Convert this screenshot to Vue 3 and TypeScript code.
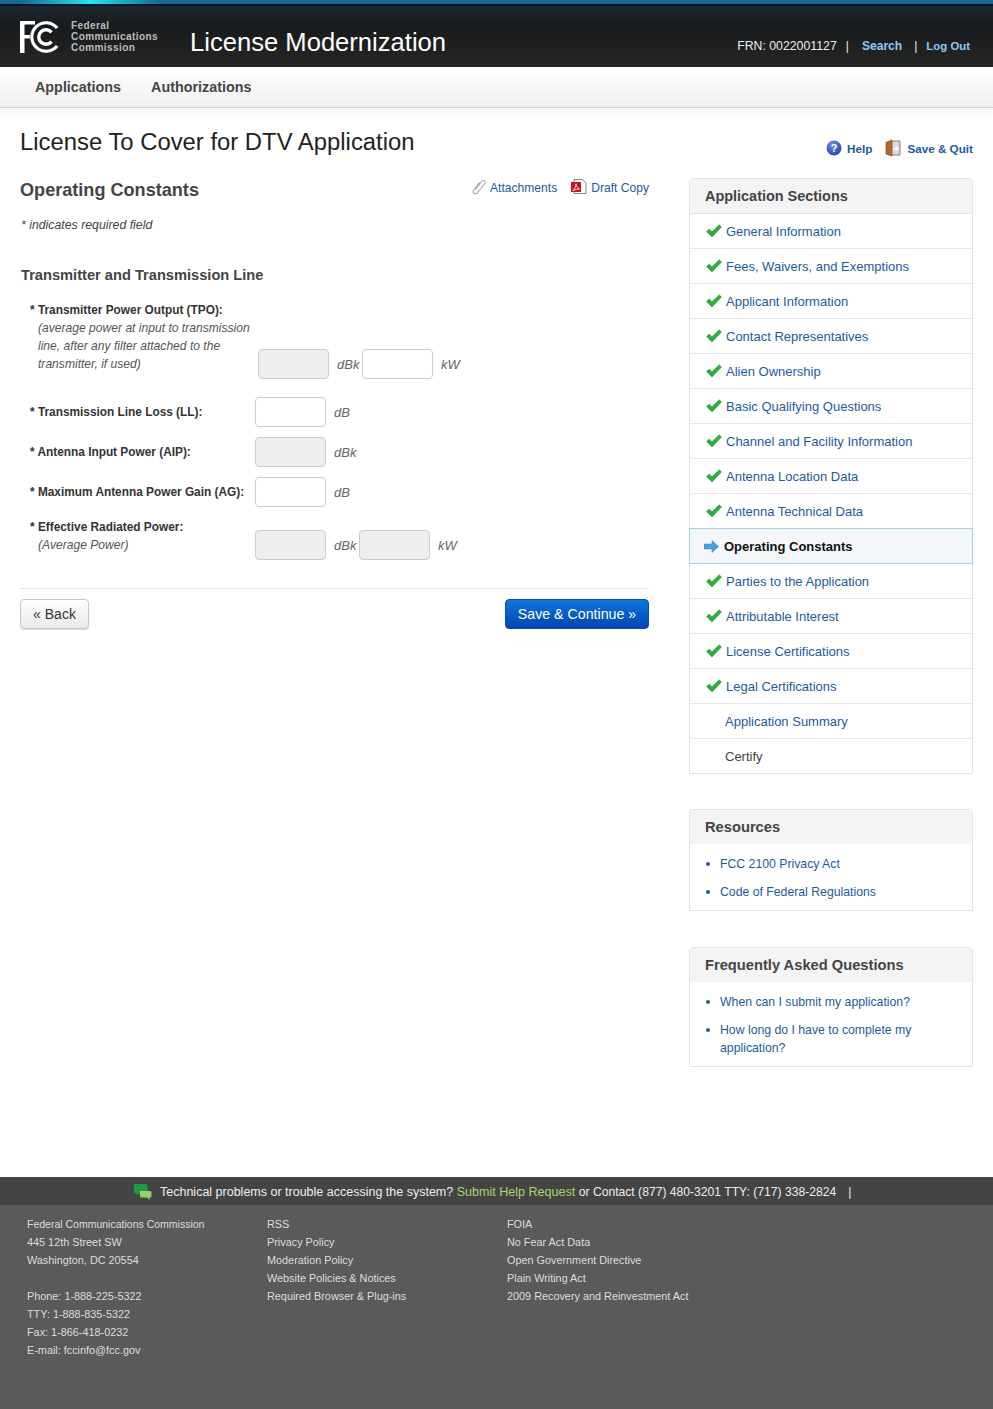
<script setup lang="ts">
interface Section { label: string; done: boolean; current?: boolean }
const sections: Section[] = [
  { label: 'General Information', done: true },
  { label: 'Fees, Waivers, and Exemptions', done: true },
  { label: 'Applicant Information', done: true },
  { label: 'Contact Representatives', done: true },
  { label: 'Alien Ownership', done: true },
  { label: 'Basic Qualifying Questions', done: true },
  { label: 'Channel and Facility Information', done: true },
  { label: 'Antenna Location Data', done: true },
  { label: 'Antenna Technical Data', done: true },
  { label: 'Operating Constants', done: false, current: true },
  { label: 'Parties to the Application', done: true },
  { label: 'Attributable Interest', done: true },
  { label: 'License Certifications', done: true },
  { label: 'Legal Certifications', done: true },
  { label: 'Application Summary', done: false },
  { label: 'Certify', done: false },
]
const footerA = ['Federal Communications Commission', '445 12th Street SW', 'Washington, DC 20554', '', 'Phone: 1-888-225-5322', 'TTY: 1-888-835-5322', 'Fax: 1-866-418-0232', 'E-mail: fccinfo@fcc.gov']
const footerB = ['RSS', 'Privacy Policy', 'Moderation Policy', 'Website Policies & Notices', 'Required Browser & Plug-ins']
const footerC = ['FOIA', 'No Fear Act Data', 'Open Government Directive', 'Plain Writing Act', '2009 Recovery and Reinvestment Act']
</script>

<template>
  <div class="page">
    <div class="topline"><div class="glow"></div></div>
    <header class="masthead">
      <div class="brand">
        <svg class="logo" width="41" height="32" viewBox="0 0 41 32">
          <path d="M0 0H15V3.500H4.500V14H11.500V17.500H4.500V32H0Z" fill="#fff" />
          <path d="M38.600 6.100A16 16 0 1 0 38.600 25.900L35.900 23.700A12.500 12.500 0 1 1 35.900 8.300Z" fill="#fff" stroke="#1b1d20" stroke-width=".4" />
          <path d="M32.900 10.200A9 9 0 1 0 32.900 21.800L30.200 19.500A5.500 5.500 0 1 1 30.200 12.500Z" fill="#fff" />
        </svg>
        <div class="agency"><span>Federal</span><span>Communications</span><span>Commission</span></div>
      </div>
      <div class="product">License Modernization</div>
      <div class="usernav">
        <span class="frn">FRN: 0022001127</span><span class="pipe first">|</span>
        <a class="toplink">Search</a><span class="pipe second">|</span><a class="toplink logout">Log Out</a>
      </div>
    </header>
    <nav class="mainnav"><a>Applications</a><a>Authorizations</a></nav>

    <div class="titlebar">
      <h1>License To Cover for DTV Application</h1>
      <div class="titleactions">
        <a class="act">
          <svg width="16" height="16" viewBox="0 0 16 16"><defs><radialGradient id="hg" cx=".4" cy=".3" r=".8"><stop offset="0" stop-color="#6f8fe8" /><stop offset="1" stop-color="#1f3fa8" /></radialGradient></defs><circle cx="8" cy="8" r="7.5" fill="url(#hg)" /><text x="8" y="12" text-anchor="middle" class="qmark">?</text></svg>
          Help
        </a>
        <a class="act quit">
          <svg width="16" height="18" viewBox="0 0 16 18"><path d="M6 2H15V16H6Z" fill="#d9d9d9" stroke="#9a7a5c" /><path d="M1 3.500L7 1V17L1 15Z" fill="#b5652e" stroke="#8a4a20" stroke-width=".7" /><path d="M8.500 9H11V7L14 9.500L11 12V10.500H8.500Z" fill="#fff" /></svg>
          Save &amp; Quit
        </a>
      </div>
    </div>

    <div class="columns">
      <main class="content">
        <div class="contenthead">
          <h2>Operating Constants</h2>
          <div class="doclinks">
            <a class="doc">
              <svg width="14" height="16" viewBox="0 0 14 16" fill="none" stroke="#aaa" stroke-width="1.100"><path d="M3.500 10.500L9.500 2.500C10.500 1.200 12 1.200 12.700 2C13.400 2.800 13.200 4 12.400 5L5.500 13.600C4.500 14.900 3 15 2 14.200C1 13.400 1 12 1.800 10.900L7.500 3.600" /></svg>
              Attachments
            </a>
            <a class="doc pdf">
              <svg width="16" height="16" viewBox="0 0 16 16"><path d="M3 .5H11.500L15 4V14.500H3Z" fill="#fff" stroke="#666" stroke-width=".8" /><rect x="0" y="3" width="10" height="10" fill="#d0101a" /><path d="M2 11.500C4 10 5 7 5 4.800C5.500 7.500 6.500 9.500 8.500 10C6.500 10 4.500 10.500 2 11.500Z" fill="none" stroke="#fff" stroke-width=".9" /></svg>
              Draft Copy
            </a>
          </div>
        </div>
        <p class="required">* indicates required field</p>
        <h3>Transmitter and Transmission Line</h3>

        <div class="frow r1">
          <div class="lbl wide"><b>* Transmitter Power Output (TPO):</b><i>(average power at input to transmission<br />line, after any filter attached to the<br />transmitter, if used)</i></div>
          <span class="field off"></span><span class="unit">dBk</span><span class="field"></span><span class="unit">kW</span>
        </div>
        <div class="frow r2">
          <div class="lbl"><b>* Transmission Line Loss (LL):</b></div>
          <span class="field"></span><span class="unit">dB</span>
        </div>
        <div class="frow r3">
          <div class="lbl"><b>* Antenna Input Power (AIP):</b></div>
          <span class="field off"></span><span class="unit">dBk</span>
        </div>
        <div class="frow r4">
          <div class="lbl"><b>* Maximum Antenna Power Gain (AG):</b></div>
          <span class="field"></span><span class="unit">dB</span>
        </div>
        <div class="frow r5">
          <div class="lbl"><b>* Effective Radiated Power:</b><i>(Average Power)</i></div>
          <span class="field off"></span><span class="unit">dBk</span><span class="field off"></span><span class="unit">kW</span>
        </div>

        <div class="actions">
          <button class="btn back">« Back</button>
          <button class="btn primary">Save &amp; Continue »</button>
        </div>
      </main>

      <aside class="side">
        <section class="panel sections">
          <h4>Application Sections</h4>
          <ul>
            <li v-for="s in sections" :key="s.label" :class="{ current: s.current, plain: !s.done && !s.current }">
              <svg v-if="s.done" class="check" width="16" height="14" viewBox="0 0 16 14"><path d="M.5 7.500L3.200 5 6 7.800 13.200 .8 15.500 3 6 13Z" fill="#2fae3f" stroke="#1f8f30" stroke-width=".5" /></svg>
              <svg v-if="s.current" class="arrow" width="15" height="13" viewBox="0 0 15 13"><path d="M0 4H8V.5L14.500 6.500 8 12.500V9H0Z" fill="#4d9ddc" stroke="#3c86c4" stroke-width=".5" /></svg>
              <span>{{ s.label }}</span>
            </li>
          </ul>
        </section>

        <section class="panel links res">
          <h4 class="flat">Resources</h4>
          <ul>
            <li>FCC 2100 Privacy Act</li>
            <li>Code of Federal Regulations</li>
          </ul>
        </section>

        <section class="panel links faq">
          <h4 class="flat">Frequently Asked Questions</h4>
          <ul>
            <li>When can I submit my application?</li>
            <li>How long do I have to complete my<br />application?</li>
          </ul>
        </section>
      </aside>
    </div>

    <footer class="foot">
      <div class="notice">
        <svg width="18" height="16" viewBox="0 0 18 16"><path d="M0 1.500Q0 0 1.500 0H12Q13.500 0 13.500 1.500V8Q13.500 9.500 12 9.500H5L2.500 11.500V9.500H1.500Q0 9.500 0 8Z" fill="#1e9a4a" /><path d="M6 7H16Q17.500 7 17.500 8.500V12Q17.500 13.500 16 13.500H15.500V16L13 13.500H7.500Q6 13.500 6 12Z" fill="#9ccc65" /></svg>
        <span class="noticetext">Technical problems or trouble accessing the system? <a>Submit Help Request</a> <span class="contact">or Contact (877) 480-3201 TTY: (717) 338-2824</span></span>
        <span class="noticepipe">|</span>
      </div>
      <div class="footcols">
        <div class="fc"><div v-for="(t, i) in footerA" :key="i" class="fl">{{ t }}</div></div>
        <div class="fc"><div v-for="t in footerB" :key="t" class="fl">{{ t }}</div></div>
        <div class="fc"><div v-for="t in footerC" :key="t" class="fl">{{ t }}</div></div>
      </div>
    </footer>
  </div>
</template>

<style>
html, body { margin: 0; background: #fff; }
</style>

<style scoped>
.page { width: 993px; font-family: "Liberation Sans", Arial, sans-serif; color: #333; height: 1409px; overflow: hidden; display: flex; flex-direction: column; }
.topline { height: 4px; background: #17688f; border-bottom: 2px solid #04162b; }
.glow { width: 140px; height: 4px; background: linear-gradient(90deg, #17688f, #27e4f2 50%, #17688f); margin-left: 20px; }
.masthead { height: 61px; background: linear-gradient(#1e2732, #181a1c 35%, #262626); display: flex; align-items: flex-start; position: relative; }
.brand { display: flex; width: 190px; padding: 15px 0 0 20px; box-sizing: border-box; }
.agency { display: flex; flex-direction: column; margin: -1px 0 0 10px; color: #bdbdbd; font-size: 10px; font-weight: bold; line-height: 11px; letter-spacing: .42px; }
.product { color: #fff; font-size: 25.6px; line-height: 32px; margin-top: 20px; }
.usernav { margin-left: auto; padding: 33px 23px 0 0; font-size: 12px; line-height: 15px; color: #eee; display: flex; }
.frn { font-size: 12.3px; }
.toplink { color: #8ccaf5; font-weight: bold; font-size: 12.1px; }
.toplink.logout { font-size: 11.4px; }
.pipe { color: #eee; }
.first { margin: 0 13px 0 9px; }
.second { margin: 0 9px 0 12px; }
.mainnav { height: 41px; box-sizing: border-box; border-bottom: 1px solid #d4d4d4; background: linear-gradient(#fff, #f0f0f0); box-shadow: 0 4px 12px rgba(0,0,0,.06); padding-left: 35px; display: flex; gap: 30px; font-size: 14.35px; font-weight: bold; line-height: 40px; color: #444; }
.titlebar { display: flex; justify-content: space-between; align-items: flex-start; padding: 19px 20px 0; height: 70px; box-sizing: border-box; }
h1 { margin: 0; font-size: 23.85px; font-weight: normal; line-height: 30px; color: #222; }
.titleactions { display: flex; gap: 13px; margin-top: 12px; font-size: 11.7px; font-weight: bold; color: #1d5a9f; }
.act { display: flex; align-items: center; gap: 5px; height: 18px; }
.qmark { font: bold 11px "Liberation Sans", sans-serif; fill: #fff; }
.quit { gap: 6px; }
.columns { display: flex; padding: 0 20px; gap: 40px; align-items: flex-start; }
.content { width: 629px; }
.contenthead { display: flex; justify-content: space-between; }
h2 { margin: 0; font-size: 18.1px; line-height: 24px; color: #444; }
.doclinks { display: flex; gap: 14px; font-size: 12.1px; color: #1d5a9f; }
.doc { display: flex; align-items: center; gap: 4px; height: 20px; }
.doc svg { margin-top: -2px; }
.required { margin: 14px 0 0 1px; font-size: 12.3px; line-height: 18px; font-style: italic; color: #444; }
h3 { margin: 31px 0 0 1px; font-size: 14.65px; line-height: 20px; color: #444; }
.frow { display: flex; align-items: flex-end; font-size: 12px; }
.lbl { width: 235px; padding-left: 10px; box-sizing: border-box; line-height: 18px; color: #333; white-space: nowrap; flex: none; }
.lbl.wide { width: 238px; }
.lbl b { display: block; font-size: 11.85px; }
.lbl i { display: block; padding-left: 8px; color: #555; font-size: 12.1px; }
.field { width: 71px; height: 30px; box-sizing: border-box; border: 1px solid #ccc; border-radius: 4px; background: #fff; flex: none; }
.field.off { background: #eee; }
.unit { font-style: italic; font-size: 13px; color: #666; height: 30px; line-height: 32px; margin-left: 8px; width: 25px; flex: none; }
.r1 { margin-top: 16px; }
.r1 .lbl { padding-bottom: 6px; }
.r2 { margin-top: 18px; align-items: center; }
.r3, .r4 { margin-top: 10px; align-items: center; }
.r5 { margin-top: 11px; }
.r5 .lbl { padding-bottom: 6px; }
.actions { margin-top: 28px; border-top: 1px solid #dde6ee; padding-top: 10px; display: flex; justify-content: space-between; }
.btn { height: 30px; border-radius: 4px; font: 14px "Liberation Sans", Arial, sans-serif; padding: 0; box-sizing: border-box; }
.back { width: 69px; border: 1px solid #c8c8c8; background: linear-gradient(#fff, #e9e9e9); color: #333; box-shadow: 0 1px 1px rgba(0,0,0,.15); }
.primary { width: 144px; border: 1px solid #0a4fa8; background: linear-gradient(#0d76da, #0245b2); color: #fff; font-size: 14.2px; }
.side { width: 284px; }
.panel { border: 1px solid #e3e3e3; box-sizing: border-box; border-radius: 4px 4px 0 0; }
h4 { margin: 0; height: 35px; background: #f4f4f4; border-bottom: 1px solid #e3e3e3; box-sizing: border-box; padding-left: 15px; font-size: 14.45px; line-height: 34px; color: #444; }
h4.flat { border-bottom: 0; height: 34px; font-size: 14.7px; }
ul { list-style: none; margin: 0; padding: 0; }
.sections li { height: 35px; box-sizing: border-box; border-bottom: 1px solid #e8e8e8; display: flex; align-items: center; padding-left: 16px; font-size: 13px; color: #1d5a9f; gap: 4px; }
.sections li:last-child { border-bottom: 0; height: 34px; }
.sections li.plain { padding-left: 35px; color: #1d5a9f; }
.sections li:last-child.plain { color: #444; }
.sections li.current { background: #f3f7fa; border: 1px solid #a9cfe2; margin: -1px -1px 0; height: 36px; padding-left: 14px; font-weight: bold; color: #111; font-size: 13px; gap: 5px; }
.check { flex: none; }
.arrow { flex: none; }
.links li { position: relative; padding-left: 30px; font-size: 12.25px; line-height: 18px; color: #1d5a9f; margin-top: 10px; }
.links li::before { content: ""; position: absolute; left: 16px; top: 7px; width: 4px; height: 4px; border-radius: 2px; background: #1d5a9f; }
.links ul { padding: 1px 0 9px; }
.res { margin-top: 35px; }
.faq { margin-top: 36px; }
.foot { margin-top: 110px; flex: 1; background: #5a5a5a; color: #ddd; }
.notice { height: 28px; background: #444; display: flex; align-items: center; padding: 1px 0 0 134px; box-sizing: border-box; font-size: 12.5px; color: #eee; }
.noticetext { margin-left: 8px; }
.noticetext a { color: #a6d66e; font-size: 12.55px; }
.contact { font-size: 12.15px; }
.noticepipe { margin-left: 12px; font-size: 12px; }
.footcols { display: flex; padding: 10px 0 0 27px; }
.fc { width: 240px; }
.fl { height: 18px; font-size: 10.85px; line-height: 18px; }
.fc:first-child .fl:first-child { font-size: 10.5px; }
</style>
